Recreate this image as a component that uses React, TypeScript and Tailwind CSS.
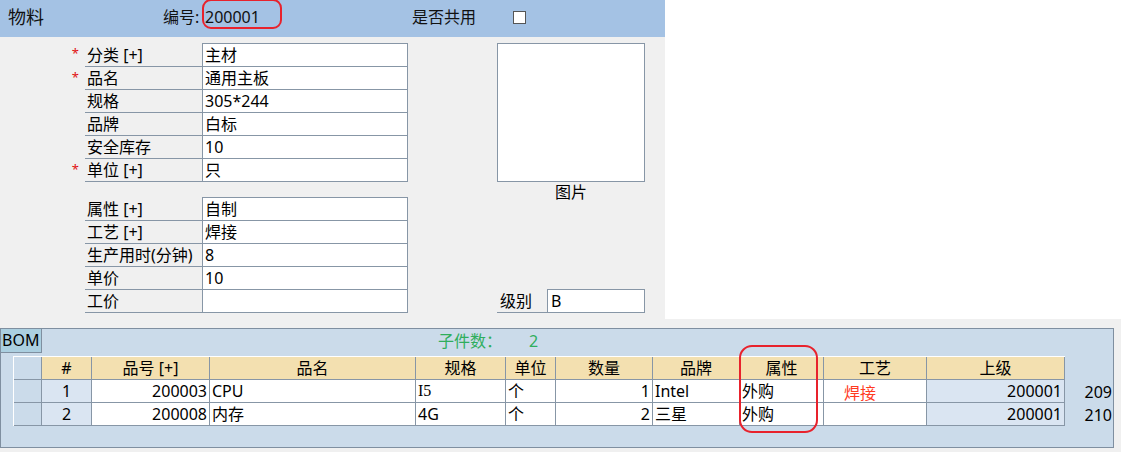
import React from 'react'

interface FormRowProps {
  label: string
  value: string
  required?: boolean
  first?: boolean
}

const FormRow: React.FC<FormRowProps> = ({ label, value, required, first }) => {
  return (
    <div className={`flex ${first ? 'h-[24px]' : 'h-[23px]'}`}>
      <div className="w-[15px] pr-[6px] pt-[3px] text-right text-[13px] leading-[14px] text-[#e01010]">
        {required ? '*' : ''}
      </div>
      <div className="flex w-[117px] items-center border-b border-[#8796a6] pl-[2px]">
        {label}
      </div>
      <div
        className={`flex w-[206px] items-center border-x border-b border-[#8796a6] bg-white pl-[2px] ${
          first ? 'border-t' : ''
        }`}
      >
        {value}
      </div>
    </div>
  )
}

const cols = [
  { title: '', w: 'w-[28px]' },
  { title: '#', w: 'w-[50px]' },
  { title: '品号 [+]', w: 'w-[118px]' },
  { title: '品名', w: 'w-[206px]' },
  { title: '规格', w: 'w-[90px]' },
  { title: '单位', w: 'w-[50px]' },
  { title: '数量', w: 'w-[97px]' },
  { title: '品牌', w: 'w-[87px]' },
  { title: '属性', w: 'w-[84px]' },
  { title: '工艺', w: 'w-[103px]' },
  { title: '上级', w: 'w-[138px]' },
]

interface BomRow {
  no: number
  code: string
  name: string
  spec: string
  unit: string
  qty: number
  brand: string
  attr: string
  craft: string
  parent: string
  id: number
}

const rows: BomRow[] = [
  { no: 1, code: '200003', name: 'CPU', spec: 'I5', unit: '个', qty: 1, brand: 'Intel', attr: '外购', craft: '焊接', parent: '200001', id: 209 },
  { no: 2, code: '200008', name: '内存', spec: '4G', unit: '个', qty: 2, brand: '三星', attr: '外购', craft: '', parent: '200001', id: 210 },
]

const cell = 'flex h-full items-center border-r border-[#8796a6] px-[2px]'

const App: React.FC = () => {
  return (
    <div className="h-[452px] w-[1121px] overflow-hidden bg-[#f0f0f0] font-['Noto_Sans','Noto_Sans_CJK_SC',sans-serif] text-[16px] text-black">
      {/* top form */}
      <div className="flex h-[319px]">
        <div className="flex w-[665px] flex-col">
          <div className="relative flex h-[37px] items-center bg-[#a4c2e4] pb-[3px] text-[#111]">
            <span className="w-[163px] pl-[8px] text-[18px]">物料</span>
            <span className="w-[40px]">编号:</span>
            <span className="w-[209px] pl-[2px]">200001</span>
            <span className="w-[101px]">是否共用</span>
            <span className="h-[13px] w-[13px] border border-[#555] bg-white" />
            <div className="absolute left-[202px] top-[-1px] h-[30px] w-[80px] rounded-[9px] border-2 border-[#e8222c]" />
          </div>

          <div className="flex flex-1 pb-[6px] pl-[70px] pt-[6px]">
            <div className="flex w-[338px] flex-col">
              <FormRow first required label="分类 [+]" value="主材" />
              <FormRow required label="品名" value="通用主板" />
              <FormRow label="规格" value="305*244" />
              <FormRow label="品牌" value="白标" />
              <FormRow label="安全库存" value="10" />
              <FormRow required label="单位 [+]" value="只" />

              <div className="mt-auto flex flex-col">
                <FormRow first label="属性 [+]" value="自制" />
                <FormRow label="工艺 [+]" value="焊接" />
                <FormRow label="生产用时(分钟)" value="8" />
                <FormRow label="单价" value="10" />
                <FormRow label="工价" value="" />
              </div>
            </div>

            <div className="ml-[89px] flex w-[148px] flex-col">
              <div className="h-[139px] border border-[#8796a6] bg-white" />
              <div className="pt-[1px] text-center leading-[18px]">图片</div>
              <div className="mt-auto flex h-[24px]">
                <div className="flex w-[50px] items-center border-b border-[#8796a6] pl-[3px]">级别</div>
                <div className="flex w-[98px] items-center border border-[#8796a6] bg-white pl-[3px]">B</div>
              </div>
            </div>
          </div>
        </div>
        <div className="flex-1 bg-white" />
      </div>

      {/* BOM panel */}
      <div className="mt-[9px] h-[120px] w-[1114px] border border-[#7f8fa0] bg-[#cbdbea]">
        <div className="relative h-full">
          <div className="flex h-[23px] items-center">
            <div className="-ml-px -mt-px flex h-[25px] w-[42px] items-center border border-[#7f8fa0] bg-[#abcfe0] pl-[1px]">
              BOM
            </div>
            <span className="ml-[396px] text-[#2fae5c]">子件数：</span>
            <span className="ml-[27px] text-[#2fae5c]">2</span>
          </div>

          <div className="ml-[12px] mt-[4px] flex">
            <div className="flex flex-col border-l border-t border-white">
              <div className="flex h-[23px] border-b border-[#8796a6]">
                {cols.map((c, i) => (
                  <div
                    key={i}
                    className={`${c.w} ${cell} justify-center ${i === 0 ? 'bg-[#cbdbea]' : 'bg-[#f3e0b0]'}`}
                  >
                    {c.title}
                  </div>
                ))}
              </div>
              {rows.map((r) => (
                <div key={r.no} className="flex h-[23px] border-b border-[#8796a6] bg-white">
                  <div className={`w-[28px] ${cell} bg-[#cbdbea]`} />
                  <div className={`w-[50px] ${cell} justify-center bg-[#dae5f2]`}>{r.no}</div>
                  <div className={`w-[118px] ${cell} justify-end`}>{r.code}</div>
                  <div className={`w-[206px] ${cell}`}>{r.name}</div>
                  <div className={`w-[90px] ${cell} ${r.spec === 'I5' ? "font-['Liberation_Serif',serif]" : ''}`}>
                    {r.spec}
                  </div>
                  <div className={`w-[50px] ${cell}`}>{r.unit}</div>
                  <div className={`w-[97px] ${cell} justify-end`}>{r.qty}</div>
                  <div className={`w-[87px] ${cell}`}>{r.brand}</div>
                  <div className={`w-[84px] ${cell}`}>{r.attr}</div>
                  <div className={`w-[103px] ${cell} pl-[20px] pt-[3px] text-[#ff3b1f]`}>{r.craft}</div>
                  <div className={`w-[138px] ${cell} justify-end bg-[#dae5f2]`}>{r.parent}</div>
                </div>
              ))}
            </div>
            <div className="flex w-[47px] flex-col pt-[24px] text-right">
              {rows.map((r) => (
                <div key={r.id} className="flex h-[23px] items-center justify-end">
                  {r.id}
                </div>
              ))}
            </div>
          </div>

          <div className="absolute left-[738px] top-[16px] h-[88px] w-[79px] rounded-[13px] border-2 border-[#e8222c]" />
        </div>
      </div>
    </div>
  )
}

export default App
